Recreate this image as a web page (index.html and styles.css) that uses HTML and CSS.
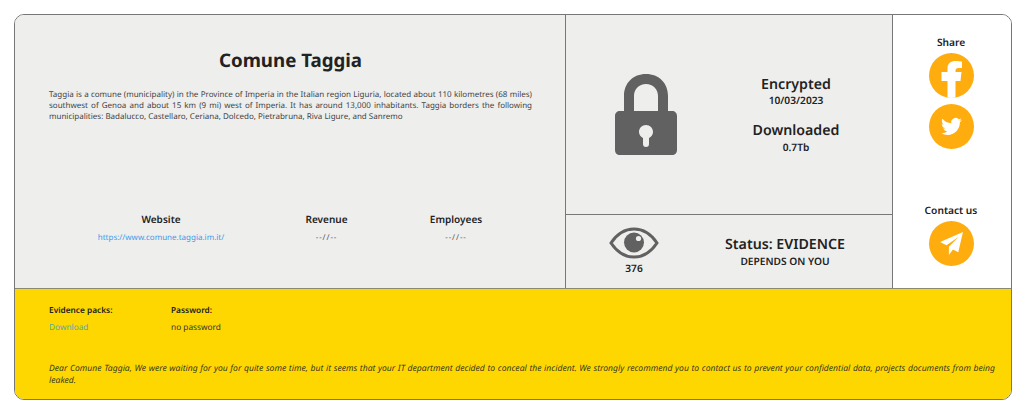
FILE: index.html
```html
<!DOCTYPE html>
<html lang="en">
  <head>
    <meta charset="UTF-8" />
    <meta name="viewport" content="width=device-width, initial-scale=1.0" />
    <title>Comune Taggia</title>
    <link rel="stylesheet" href="styles.css">
  </head>
  <body>
    <div class="card">
      <div class="top">
        <div class="info">
          <h1>Comune Taggia</h1>
          <p class="desc">Taggia is a comune (municipality) in the Province of Imperia in the Italian region Liguria, located about 110 kilometres (68 miles) southwest of Genoa and about 15 km (9 mi) west of Imperia. It has around 13,000 inhabitants. Taggia borders the following municipalities: Badalucco, Castellaro, Ceriana, Dolcedo, Pietrabruna, Riva Ligure, and Sanremo</p>
          <div class="facts">
            <div class="fact fact-web">
              <h4>Website</h4>
              <a href="#">https://www.comune.taggia.im.it/</a>
            </div>
            <div class="fact fact-rev">
              <h4>Revenue</h4>
              <span>--//--</span>
            </div>
            <div class="fact fact-emp">
              <h4>Employees</h4>
              <span>--//--</span>
            </div>
          </div>
        </div>

        <div class="middle">
          <div class="lock-box">
            <svg class="lock" viewBox="0 0 62 82" aria-hidden="true">
              <path fill="#616161" fill-rule="evenodd" d="M9 37V22C9 9 18 0 31 0s22 9 22 22v15h4c3 0 5 2 5 5v34c0 3-2 5-5 5H5c-3 0-5-2-5-5V42c0-3 2-5 5-5zM19 37h24V22c0-7-5-12-12-12s-12 5-12 12zM31 51c-4 0-7 3-7 7 0 3 2 5 4 6v6c0 2 1 3 3 3s3-1 3-3v-6c2-1 4-3 4-6 0-4-3-7-7-7z"/>
            </svg>
            <div class="lock-text">
              <h3>Encrypted</h3>
              <b>10/03/2023</b>
              <h3 class="second">Downloaded</h3>
              <b>0.7Tb</b>
            </div>
          </div>
          <div class="status-box">
            <div class="views">
              <svg class="eye" viewBox="0 0 50 32" aria-hidden="true">
                <path fill="none" stroke="#616161" stroke-width="3" d="M2 16C8 7 16 2 25 2s17 5 23 14c-6 9-14 14-23 14S8 25 2 16z"/>
                <circle cx="25" cy="15.500" r="10" fill="#616161"/>
                <circle cx="29.500" cy="11.500" r="2.600" fill="#eeeeed"/>
              </svg>
              <b>376</b>
            </div>
            <div class="status-text">
              <h3>Status: EVIDENCE</h3>
              <b>DEPENDS ON YOU</b>
            </div>
          </div>
        </div>

        <div class="side">
          <div class="share">
            <h5>Share</h5>
            <a class="round" href="#">
              <svg viewBox="0 0 45 45" aria-hidden="true">
                <path fill="#fff" d="M18.500 45V28h-6v-9h6v-3.500C18.500 10 22 8 26.500 8c2.500 0 6.500.5 6.500.5V15h-3.500c-2.500 0-3 1.500-3 3v1h6l-1 9h-5v17z"/>
              </svg>
            </a>
            <a class="round" href="#">
              <svg viewBox="0 0 24 24" aria-hidden="true" class="bird">
                <path fill="#fff" d="M23.950 4.570a10 10 0 0 1-2.820.77 4.960 4.960 0 0 0 2.160-2.720c-.95.550-2 .96-3.130 1.190a4.920 4.920 0 0 0-8.380 4.480C7.690 8.090 4.070 6.130 1.640 3.160a4.820 4.820 0 0 0-.67 2.480c0 1.710.87 3.210 2.190 4.100a4.900 4.900 0 0 1-2.230-.62v.06a4.920 4.920 0 0 0 3.950 4.830 5 5 0 0 1-2.210.08 4.940 4.940 0 0 0 4.610 3.420A9.870 9.870 0 0 1 0 19.540a14 14 0 0 0 7.560 2.210c9.050 0 14-7.500 14-13.980 0-.21 0-.42-.02-.63a9.940 9.940 0 0 0 2.410-2.570z"/>
              </svg>
            </a>
          </div>
          <div class="contact">
            <h5>Contact us</h5>
            <a class="round" href="#">
              <svg viewBox="0 0 24 24" aria-hidden="true" class="plane">
                <path fill="#fff" d="M23 1 1 10.500l6.200 3.100L19 5.500 9.500 15.200V23l3.900-5.300 5.100 2.600z"/>
              </svg>
            </a>
          </div>
        </div>
      </div>

      <div class="bottom">
        <div class="packs">
          <div class="pack pack-first">
            <h5>Evidence packs:</h5>
            <a href="#">Download</a>
          </div>
          <div class="pack">
            <h5>Password:</h5>
            <span>no password</span>
          </div>
        </div>
        <p class="note">Dear Comune Taggia, We were waiting for you for quite some time, but it seems that your IT department decided to conceal the incident. We strongly recommend you to contact us to prevent your confidential data, projects documents from being leaked.</p>
      </div>
    </div>
  </body>
</html>
```

FILE: styles.css
```css
* {
  margin: 0;
  padding: 0;
  box-sizing: border-box;
}

body {
  font-family: "Noto Sans", "Open Sans", sans-serif;
  text-rendering: geometricPrecision;
  background-color: #fff;
  color: #222;
  padding: 14px 12px 0 14px;
}

a {
  color: #3d9be9;
  text-decoration: none;
}

.card {
  width: 998px;
  height: 386px;
  border: 1px solid #777;
  border-radius: 10px;
  overflow: hidden;
  display: flex;
  flex-direction: column;
}

.top {
  height: 274px;
  display: flex;
  border-bottom: 1px solid #8a8a70;
}

/* Left column */
.info {
  width: 550px;
  background-color: #eeeeed;
  padding: 0 33px 0 34px;
  display: flex;
  flex-direction: column;
}

h1 {
  font-size: 18.700px;
  line-height: 28px;
  font-weight: 700;
  text-align: center;
  margin-top: 32px;
}

.desc {
  font-size: 8px;
  line-height: 11px;
  color: #444;
  text-align: justify;
  margin-top: 14px;
}

.facts {
  display: flex;
  margin: 90px 0 0 -1px;
  text-align: center;
}

.fact h4 {
  font-size: 10px;
  line-height: 14px;
  font-weight: 600;
}

.fact a,
.fact span {
  display: block;
  font-size: 8px;
  line-height: 12px;
  margin-top: 6px;
}

.fact span {
  color: #555;
  letter-spacing: 0.9px;
}

.fact-web {
  width: 226px;
}

.fact-rev {
  width: 105px;
}

.fact-emp {
  width: 100px;
  margin-left: 27px;
}

/* Middle column */
.middle {
  width: 328px;
  background-color: #eeeeed;
  border-left: 1px solid #777;
  border-right: 1px solid #777;
  display: flex;
  flex-direction: column;
}

.lock-box {
  height: 200px;
  display: flex;
  align-items: flex-start;
  border-bottom: 1px solid #777;
}

.lock {
  width: 62px;
  height: 82px;
  margin: 59px 0 0 49px;
}

.lock-text {
  width: 120px;
  margin: 60px 0 0 59px;
  text-align: center;
}

h3 {
  font-size: 14.200px;
  line-height: 19px;
  font-weight: 600;
}

.lock-text b,
.status-text b,
.views b {
  display: block;
  font-size: 10.200px;
  line-height: 13px;
  font-weight: 600;
}

.lock-text .second {
  margin-top: 14px;
}

.lock-text .second + b {
  margin-top: 1px;
}

.status-box {
  flex: 1;
  display: flex;
  align-items: flex-start;
}

.views {
  width: 50px;
  margin: 12px 0 0 43px;
  text-align: center;
}

.eye {
  display: block;
  width: 50px;
  height: 32px;
}

.views b {
  margin-top: 3px;
}

.status-text {
  width: 130px;
  margin: 20px 0 0 61px;
  text-align: center;
}

.status-text b {
  margin-top: 1px;
}

/* Right column */
.side {
  flex: 1;
  background-color: #fff;
  padding-right: 2px;
  display: flex;
  flex-direction: column;
  align-items: center;
}

.share,
.contact {
  display: flex;
  flex-direction: column;
  align-items: center;
}

.share {
  margin-top: 21px;
}

.contact {
  margin-top: 49px;
}

h5 {
  font-size: 10.200px;
  line-height: 13px;
  font-weight: 600;
  margin-bottom: 4px;
}

.round {
  width: 45px;
  height: 45px;
  border-radius: 50%;
  background-color: #ffac0f;
  overflow: hidden;
  display: flex;
  align-items: center;
  justify-content: center;
  margin-bottom: 6px;
}

.round svg {
  width: 45px;
  height: 45px;
}

.round svg.bird {
  width: 21px;
  height: 21px;
}

.round svg.plane {
  width: 25px;
  height: 25px;
}

/* Yellow footer */
.bottom {
  flex: 1;
  background-color: #ffd700;
  padding: 16px 16px 0 34px;
  color: #333;
}

.packs {
  display: flex;
}

.pack-first {
  width: 122px;
}

.pack h5 {
  font-size: 8.300px;
  line-height: 12px;
  font-weight: 600;
  color: #222;
  margin-bottom: 0;
}

.pack a,
.pack span {
  display: block;
  font-size: 8.300px;
  line-height: 12px;
  margin-top: 5px;
}

.pack a {
  color: #5ba6a8;
}

.note {
  font-size: 8.600px;
  line-height: 12px;
  font-style: italic;
  text-align: justify;
  margin-top: 28px;
  color: #3a3a20;
}
```
